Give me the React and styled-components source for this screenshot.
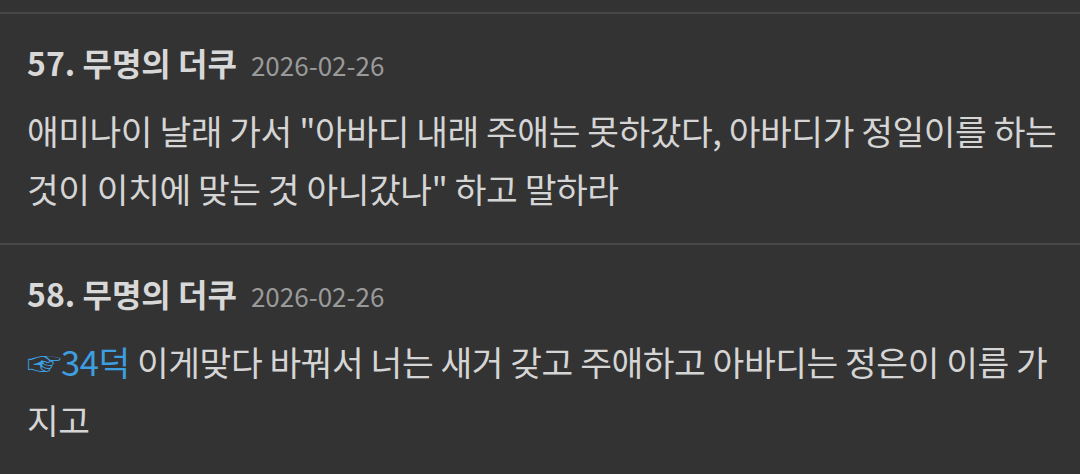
import React from "react";
import styled, { createGlobalStyle } from "styled-components";

const GlobalStyle = createGlobalStyle`
  html, body {
    margin: 0;
    padding: 0;
    background: #333333;
  }
  body {
    font-family: "Noto Sans CJK KR", "Noto Sans", sans-serif;
    color: #d5d5d5;
  }
`;

const List = styled.ul`
  list-style: none;
  margin: 0;
  padding: 12px 0 0 0;
`;

const Comment = styled.li`
  border-top: 2px solid #474747;
  padding: 28px 20px 26px 27px;
`;

const Header = styled.div`
  display: flex;
  align-items: baseline;
  gap: 14px;
  line-height: 40px;
`;

const Author = styled.span`
  font-size: 32px;
  font-weight: 700;
  color: #d8d8d8;
`;

const DateText = styled.span`
  font-size: 26px;
  color: #9a9a9a;
`;

const Body = styled.p`
  margin: 16px 0 0 0;
  font-size: 34.5px;
  line-height: 58px;
  letter-spacing: -0.45px;
  color: #d5d5d5;
`;

const Anchor = styled.a`
  color: #3d9ee0;
  text-decoration: none;
`;

const comments = [
  {
    no: 57,
    name: "무명의 더쿠",
    date: "2026-02-26",
    text: "애미나이 날래 가서 \"아바디 내래 주애는 못하갔다, 아바디가 정일이를 하는 것이 이치에 맞는 것 아니갔나\" 하고 말하라",
  },
  {
    no: 58,
    name: "무명의 더쿠",
    date: "2026-02-26",
    ref: "34덕",
    text: " 이게맞다 바꿔서 너는 새거 갖고 주애하고 아바디는 정은이 이름 가지고",
  },
];

export default function App() {
  return (
    <>
      <GlobalStyle />
      <List>
        {comments.map((c) => (
          <Comment key={c.no}>
            <Header>
              <Author>
                {c.no}. {c.name}
              </Author>
              <DateText>{c.date}</DateText>
            </Header>
            <Body>
              {c.ref && <Anchor href="#">☞{c.ref}</Anchor>}
              {c.text}
            </Body>
          </Comment>
        ))}
      </List>
    </>
  );
}
